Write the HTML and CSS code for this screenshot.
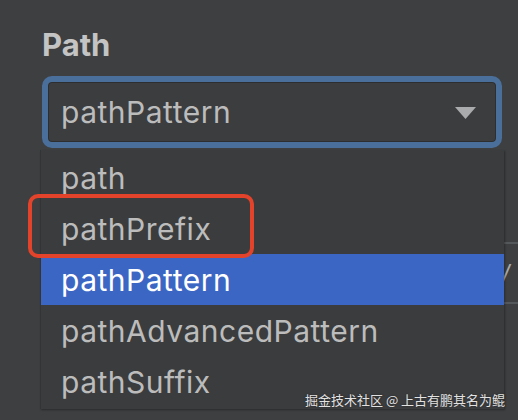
FILE: index.html
```html
<!DOCTYPE html>
<html>
<head>
<meta charset="utf-8">
<link rel="stylesheet" href="styles.css">
</head>
<body>
<div class="panel">
  <div class="label">Path</div>
  <div class="combo">
    <span class="combo-text">pathPattern</span>
    <svg class="arrow" width="21" height="12" viewBox="0 0 21 12"><path d="M0 0H21L10.5 12Z" fill="#a9abad"/></svg>
  </div>
  <div class="under-field"><span class="under-text">/</span></div>

  <ul class="popup">
    <li class="item">path</li>
    <li class="item">pathPrefix</li>
    <li class="item selected">pathPattern</li>
    <li class="item">pathAdvancedPattern</li>
    <li class="item">pathSuffix</li>
  </ul>
  <div class="annotation"></div>
  <div class="watermark">掘金技术社区 @ 上古有鹏其名为鲲</div>
</div>
</body>
</html>
```

FILE: styles.css
```css
html, body {
  margin: 0;
  padding: 0;
  background: #3d3f41;
  width: 518px;
  height: 420px;
  overflow: hidden;
}
.panel {
  position: relative;
  width: 518px;
  height: 420px;
  padding: 27px 0 0 42px;
  box-sizing: border-box;
  font-family: Inter, "Noto Sans", sans-serif;
}
.label {
  font-size: 31px;
  font-weight: 700;
  color: #c4c4c4;
  line-height: 36px;
  height: 36px;
  margin-bottom: 13px;
}
.combo {
  width: 460px;
  height: 72px;
  box-sizing: border-box;
  border: 6px solid #4b6f9b;
  border-radius: 10px;
  box-shadow: inset 0 0 0 1px #2c2e30;
  background: #3b3d3f;
  display: flex;
  align-items: center;
  justify-content: space-between;
  padding: 0 20px 0 13px;
}
.combo-text {
  font-size: 30px;
  letter-spacing: 0.5px;
  color: #bcbcbc;
  line-height: 1;
}
.arrow {
  display: block;
  margin-top: 2px;
}
.under-field {
  margin-top: 94px;
  margin-left: 420px;
  height: 58px;
  border-top: 2px solid #55585a;
  border-bottom: 2px solid #55585a;
  display: flex;
  align-items: center;
  justify-content: flex-end;
  padding-right: 8px;
  box-sizing: content-box;
  width: 48px;
}
.under-text {
  font-size: 24px;
  color: #a9a9a9;
  font-style: italic;
}
.popup {
  position: absolute;
  left: 40px;
  top: 150px;
  width: 464px;
  height: 259px;
  box-sizing: border-box;
  margin: 0;
  padding: 2px 0 0 0;
  list-style: none;
  background: #3b3c3e;
  border-left: 1px solid #333436;
  box-shadow: 1px 1px 2px rgba(0,0,0,0.35);
}
.item {
  height: 51px;
  display: flex;
  align-items: center;
  padding-left: 20px;
  font-size: 30px;
  letter-spacing: 0.5px;
  color: #bcbcbc;
}
.item.selected {
  background: #3c66c4;
  color: #ffffff;
}
.annotation {
  position: absolute;
  left: 28px;
  top: 194px;
  width: 226px;
  height: 64px;
  box-sizing: border-box;
  border: 4px solid #e3432a;
  border-radius: 10px;
}
.watermark {
  position: absolute;
  left: 305px;
  top: 390px;
  font-family: "Noto Sans CJK SC", sans-serif;
  font-size: 13px;
  line-height: 20px;
  color: #e2e2e2;
  white-space: nowrap;
  text-shadow: 0 0 2px rgba(0,0,0,0.5);
}
```
